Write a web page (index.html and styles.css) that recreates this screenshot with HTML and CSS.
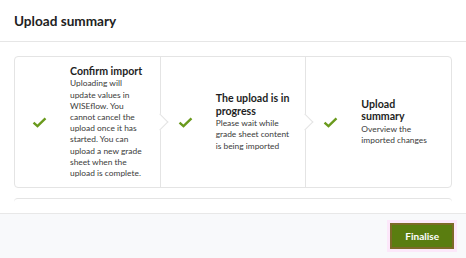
FILE: index.html
```html
<!DOCTYPE html>
<html lang="en">
<head>
  <meta charset="UTF-8" />
  <meta name="viewport" content="width=device-width, initial-scale=1.0"/>
  <title>Upload summary</title>
  <link rel="stylesheet" href="styles.css">
</head>
<body>
  <div class="modal">
    <!-- Header -->
    <div class="modal-header">
      <h2>Upload summary</h2>
    </div>

    <!-- Body -->
    <div class="modal-body">
      <div class="steps">
        <div class="step">
          <svg class="check" viewBox="0 0 16 12" width="15" height="11"><path d="M1.5 6.2 L5.8 10 L14.5 1.5" fill="none" stroke="#6a9a1d" stroke-width="2.6"/></svg>
          <div class="step-text">
            <h3>Confirm import</h3>
            <p>Uploading will update values in WISEflow. You cannot cancel the upload once it has started. You can upload a new grade sheet when the upload is complete.</p>
          </div>
        </div>
        <div class="step">
          <svg class="check" viewBox="0 0 16 12" width="15" height="11"><path d="M1.5 6.2 L5.8 10 L14.5 1.5" fill="none" stroke="#6a9a1d" stroke-width="2.6"/></svg>
          <div class="step-text">
            <h3>The upload is in progress</h3>
            <p>Please wait while grade sheet content is being imported</p>
          </div>
        </div>
        <div class="step">
          <svg class="check" viewBox="0 0 16 12" width="15" height="11"><path d="M1.5 6.2 L5.8 10 L14.5 1.5" fill="none" stroke="#6a9a1d" stroke-width="2.6"/></svg>
          <div class="step-text">
            <h3>Upload summary</h3>
            <p>Overview the imported changes</p>
          </div>
        </div>
      </div>
      <div class="summary-table"></div>
    </div>

    <!-- Footer -->
    <div class="modal-footer">
      <button class="btn-primary">Finalise</button>
    </div>
  </div>
</body>
</html>
```

FILE: styles.css
```css
body, html {
  margin: 0;
  padding: 0;
  font-family: Lato, "Noto Sans", sans-serif;
  background-color: #fff;
  color: #222;
}

.modal {
  width: 466px;
  height: 258px;
  display: flex;
  flex-direction: column;
  overflow: hidden;
}

.modal-header {
  height: 41px;
  border-bottom: 1px solid #e6e6e6;
  padding: 0 14px;
  display: flex;
  align-items: center;
  flex-shrink: 0;
}

.modal-header h2 {
  margin: 0;
  font-size: 13.6px;
  font-weight: 700;
  color: #222;
}

.modal-body {
  flex: 1;
  overflow: hidden;
  padding: 14px 14px 0 14px;
}

.steps {
  display: flex;
  height: 132px;
  border: 1px solid #e4e4e4;
  border-radius: 4px;
  box-sizing: border-box;
}

.step {
  flex: 1;
  position: relative;
  display: flex;
  align-items: center;
  padding: 0 10px 0 17px;
  border-right: 1px solid #e4e4e4;
}

.step:last-child {
  border-right: none;
}

.step:not(:last-child)::after {
  content: "";
  position: absolute;
  right: -6px;
  top: 50%;
  width: 11px;
  height: 11px;
  margin-top: -6px;
  background: #fff;
  border-top: 1px solid #e4e4e4;
  border-right: 1px solid #e4e4e4;
  transform: rotate(45deg);
  z-index: 1;
}

.check {
  flex-shrink: 0;
  margin-right: 23px;
}

.step-text {
  width: 76px;
}

.step-text h3 {
  margin: 0 0 1px 0;
  font-size: 10.6px;
  line-height: 12.5px;
  font-weight: 700;
  color: #1e1e1e;
}

.step-text p {
  margin: 0;
  font-size: 8.4px;
  line-height: 11.2px;
  color: #3a3a3a;
}

.summary-table {
  margin-top: 10px;
  height: 40px;
  border-top: 1px solid #e4e4e4;
  border-radius: 4px 4px 0 0;
}

.modal-footer {
  height: 44px;
  flex-shrink: 0;
  border-top: 1px solid #e8e8e8;
  background-color: #f8f9fb;
  display: flex;
  align-items: center;
  justify-content: flex-end;
  padding-right: 12px;
}

.btn-primary {
  font-family: inherit;
  font-size: 10px;
  font-weight: 700;
  color: #fff;
  background-color: #5a7d10;
  border: 2px solid #7d6a28;
  box-shadow: 0 0 0 3px #fce8fa;
  padding: 0 13px;
  height: 26px;
  cursor: pointer;
}

.btn-primary:hover {
  background-color: #4e6e0c;
}
```
